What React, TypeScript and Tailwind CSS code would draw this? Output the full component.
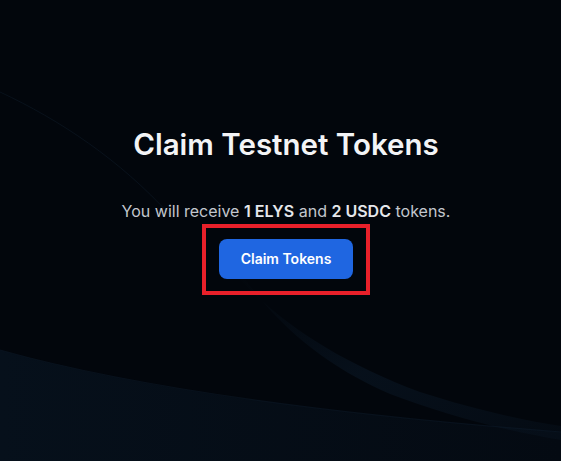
export default function App() {
  return (
    <div
      className="relative min-h-screen w-full overflow-hidden bg-[#02060c] font-['Inter',_'Liberation_Sans',_sans-serif]"
    >
      {/* background swooshes */}
      <svg
        className="pointer-events-none absolute inset-0 h-full w-full"
        viewBox="0 0 561 461"
        preserveAspectRatio="none"
      >
        <defs>
          <linearGradient id="band" x1="0" y1="0" x2="1" y2="1">
            <stop offset="0" stopColor="#0b1826" stopOpacity="0" />
            <stop offset="0.5" stopColor="#0b1a2a" stopOpacity="0.5" />
            <stop offset="1" stopColor="#0d1d2e" stopOpacity="0.2" />
          </linearGradient>
          <linearGradient id="floor" x1="0" y1="0" x2="1" y2="0">
            <stop offset="0" stopColor="#06101b" />
            <stop offset="1" stopColor="#040a12" />
          </linearGradient>
        </defs>
        <path
          d="M0 350 C 160 395, 380 418, 561 432 L561 461 L0 461 Z"
          fill="url(#floor)"
        />
        <path
          d="M0 350 C 160 395, 380 418, 561 432"
          fill="none"
          stroke="#0b1825"
          strokeWidth="1.2"
          opacity="0.6"
        />
        <path
          d="M232 270 C 275 320, 335 360, 420 392 C 470 408, 520 420, 561 426 L561 440 C 500 430, 440 413, 390 394 C 322 365, 275 322, 242 275 Z"
          fill="url(#band)"
        />
        <path
          d="M0 92 C 60 120, 120 160, 170 215"
          fill="none"
          stroke="#0a141f"
          strokeWidth="1"
          opacity="0.8"
        />
      </svg>

      <div className="relative flex flex-col items-center pt-[126px] pl-[11px]">
        <h1 className="text-[29.5px] leading-[36px] font-semibold text-[#f3f4f6]">
          Claim Testnet Tokens
        </h1>
        <p className="mt-[37px] text-base leading-6 text-[#c3c7ce]">
          You will receive <span className="font-semibold text-[#e5e7eb]">1 ELYS</span> and{' '}
          <span className="font-semibold text-[#e5e7eb]">2 USDC</span> tokens.
        </p>
        <div className="mt-px border-4 border-[#e8202a] px-[13px] pt-[11px] pb-[12px]">
          <button className="h-[40px] w-[134px] rounded-lg bg-[#1f66e1] text-sm font-semibold text-white">
            Claim Tokens
          </button>
        </div>
      </div>
    </div>
  );
}
